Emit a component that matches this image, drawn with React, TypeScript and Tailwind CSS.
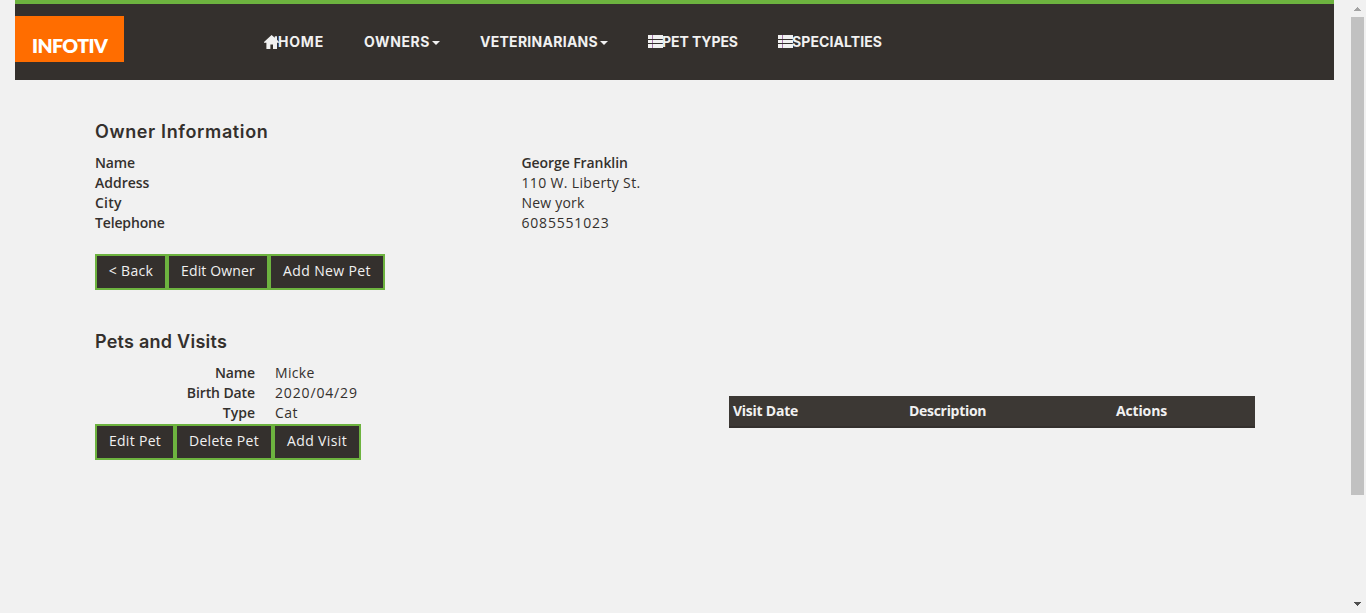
import type { ReactNode } from "react";

function HomeIcon() {
  return (
    <svg width="15" height="14" viewBox="0 0 15 14" fill="#f1f1f1" className="-mt-px -mr-px shrink-0">
      <path d="M7.6 0L10.8 2.8V1.2H13V4.8L15 7V7.8H13V14H9V9.6H6.4V14H2.4V7.8H0V7Z" />
    </svg>
  );
}

function ListIcon() {
  return (
    <svg width="15" height="14" viewBox="0 0 15 14" fill="#f1f1f1" shapeRendering="crispEdges" className="-mr-px shrink-0">
      <path d="M0 0h4v4H0zM5 0h10v4H5zM0 5h4v3H0zM5 5h10v3H5zM0 9h4v4H0zM5 9h10v4H5z" />
      <path fill="#a678ac" d="M4 0h1v4H4zM4 5h1v3H4zM4 9h1v4H4z" />
    </svg>
  );
}

function Caret() {
  return (
    <svg width="8" height="4" viewBox="0 0 8 4" fill="#f1f1f1" className="mt-[2px] ml-[2px] shrink-0">
      <path d="M0 0h8L4 4z" />
    </svg>
  );
}

function NavItem({ icon, label, labelClass, caret }: { icon?: ReactNode; label: string; labelClass: string; caret?: boolean }) {
  return (
    <a className="flex h-5 items-center px-5">
      {icon}
      <span className={labelClass}>{label}</span>
      {caret && <Caret />}
    </a>
  );
}

function Button({ label, className }: { label: string; className: string }) {
  return (
    <button className={`h-9 border-2 border-[#6db33f] bg-[#34302d] pb-0.5 text-center whitespace-nowrap text-[#f1f1f1] ${className}`}>
      {label}
    </button>
  );
}

const ownerRows = [
  { label: "Name", value: "George Franklin", labelClass: "tracking-[-0.15px]", valueClass: "font-semibold tracking-[-0.08px]" },
  { label: "Address", value: "110 W. Liberty St.", labelClass: "", valueClass: "tracking-[0.34px]" },
  { label: "City", value: "New york", labelClass: "tracking-[0.2px]", valueClass: "tracking-[0.2px]" },
  { label: "Telephone", value: "6085551023", labelClass: "tracking-[-0.15px]", valueClass: "tracking-[0.8px]" },
];

const petRows = [
  { label: "Name", value: "Micke", labelClass: "tracking-[-0.1px]", valueClass: "tracking-[0.3px]" },
  { label: "Birth Date", value: "2020/04/29", labelClass: "tracking-[-0.1px]", valueClass: "tracking-[0.85px]" },
  { label: "Type", value: "Cat", labelClass: "", valueClass: "tracking-[0.5px]" },
];

export default function App() {
  return (
    <div className="flex h-[613px] overflow-hidden bg-[#f1f1f1] font-['Open_Sans',sans-serif] text-[14px] leading-5 text-[#34302d]">
      <div className="flex-1 px-[15px]">
        <header className="flex h-20 w-[1319px] items-start border-t-4 border-[#6db33f] bg-[#34302d]">
          <div className="mt-3 flex h-[46px] w-[109px] items-end bg-[#ff6d00] pb-[6px] pl-[17px] font-['Lato',sans-serif] text-[19.5px] leading-5 font-extrabold tracking-[-0.6px] text-white">
            INFOTIV
          </div>
          <nav className="mt-7 ml-[120px] flex font-['Inter',sans-serif] font-bold whitespace-nowrap text-[#f1f1f1]">
            <NavItem icon={<HomeIcon />} label="HOME" labelClass="tracking-[0.8px]" />
            <NavItem label="OWNERS" labelClass="tracking-[0.58px]" caret />
            <NavItem label="VETERINARIANS" labelClass="tracking-[0.27px]" caret />
            <NavItem icon={<ListIcon />} label="PET TYPES" labelClass="tracking-[-0.08px]" />
            <NavItem icon={<ListIcon />} label="SPECIALTIES" labelClass="tracking-[0.1px]" />
          </nav>
        </header>

        <main className="ml-20 w-[1160px]">
          <h2 className="pt-[42px] font-['Inter',sans-serif] text-[18px] leading-5 font-semibold tracking-[0.63px]">Owner Information</h2>
          <dl className="mt-[11px]">
            {ownerRows.map((r) => (
              <div key={r.label} className="flex">
                <dt className={`w-[426.5px] font-semibold ${r.labelClass}`}>{r.label}</dt>
                <dd className={r.valueClass}>{r.value}</dd>
              </div>
            ))}
          </dl>
          <div className="mt-[21px] flex">
            <Button label="< Back" className="w-[72px] tracking-[0.3px]" />
            <Button label="Edit Owner" className="w-[102px] tracking-[0.15px]" />
            <Button label="Add New Pet" className="w-[116px] tracking-[0.38px]" />
          </div>

          <h2 className="mt-[42px] font-['Inter',sans-serif] text-[18px] leading-5 font-semibold tracking-[0.25px]">Pets and Visits</h2>
          <section className="mt-[11px] flex justify-between">
            <div>
              <dl>
                {petRows.map((r) => (
                  <div key={r.label} className="flex gap-5">
                    <dt className={`w-40 text-right font-semibold ${r.labelClass}`}>{r.label}</dt>
                    <dd className={r.valueClass}>{r.value}</dd>
                  </div>
                ))}
              </dl>
              <div className="mt-px flex">
                <Button label="Edit Pet" className="w-20 tracking-[0.3px]" />
                <Button label="Delete Pet" className="w-[98px] tracking-[0.28px]" />
                <Button label="Add Visit" className="w-[88px] tracking-[0.37px]" />
              </div>
            </div>
            <table className="mt-[33px] w-[526px] table-fixed border-separate border-spacing-0 self-start bg-[#3c3834] text-left text-[#f1f1f1]">
              <thead>
                <tr className="*:h-8 *:border-b-2 *:border-[#34302d] *:pt-0 *:pb-px *:pl-1 *:font-bold">
                  <th className="w-[176px] tracking-[-0.25px]">Visit Date</th>
                  <th className="w-[207px] tracking-[-0.3px]">Description</th>
                  <th className="tracking-[-0.15px]">Actions</th>
                </tr>
              </thead>
            </table>
          </section>
        </main>
      </div>

      <div className="flex w-[17px] flex-col items-center justify-between bg-[#f1f1f1]">
        <div className="flex flex-col items-center">
          <svg width="7" height="17" viewBox="0 0 7 17" fill="#a3a3a3" shapeRendering="crispEdges">
            <path d="M3 7h1v1h1v1h1v1h1v1H0v-1h1V9h1V8h1z" />
          </svg>
          <div className="h-[478px] w-[13px] bg-[#c1c1c1]" />
        </div>
        <svg width="7" height="17" viewBox="0 0 7 17" fill="#505050" shapeRendering="crispEdges">
          <path d="M0 6h7v1H6v1H5v1H4v1H3V9H2V8H1V7H0z" />
        </svg>
      </div>
    </div>
  );
}
